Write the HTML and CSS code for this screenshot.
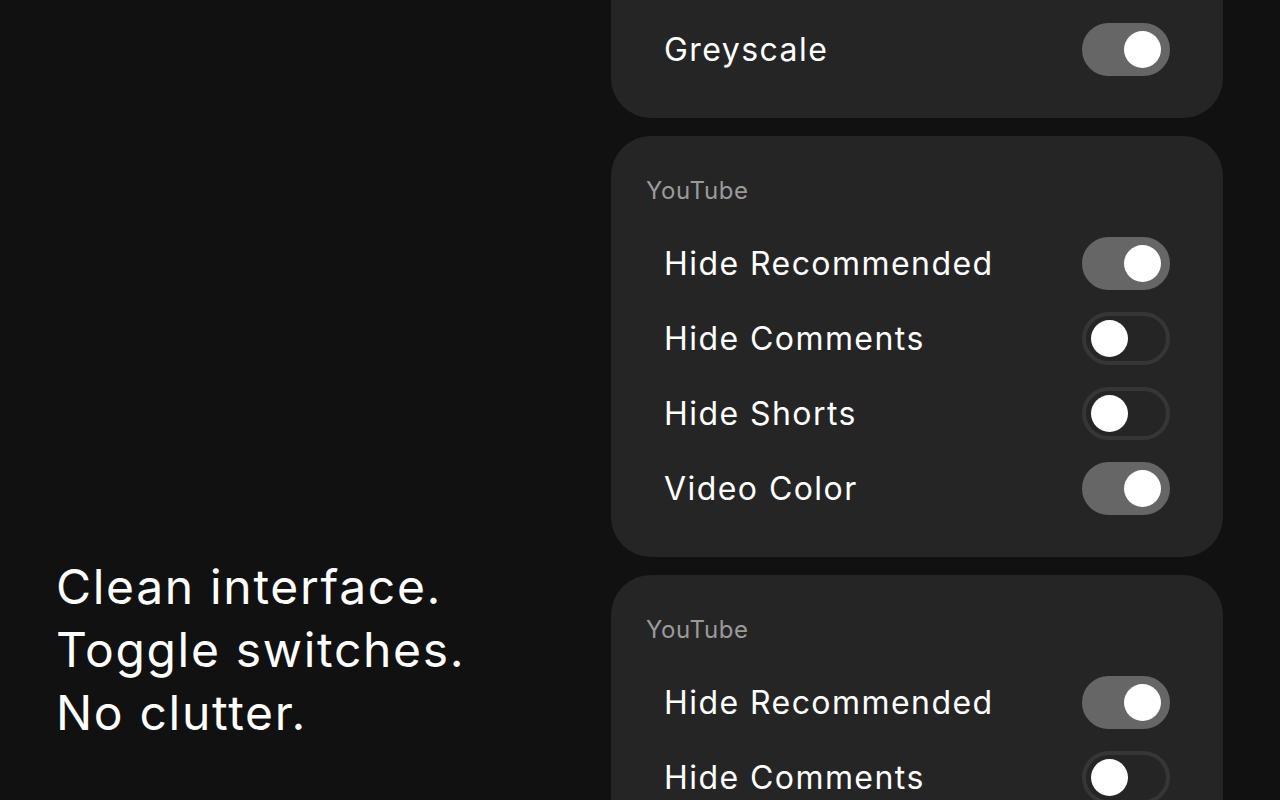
FILE: index.html
```html
<!DOCTYPE html>
<html lang="en">
<head>
<meta charset="utf-8">
<title>Settings</title>
<link rel="stylesheet" href="styles.css">
</head>
<body>
<main class="page">
  <section class="intro">
    <h1 class="headline">Clean interface.<br>Toggle switches.<br>No clutter.</h1>
  </section>
  <section class="panel">
    <div class="card">
      <div class="card-label">General</div>
      <div class="row"><span class="row-text">Greyscale</span><span class="toggle on"><span class="knob"></span></span></div>
    </div>
    <div class="card">
      <div class="card-label">YouTube</div>
      <div class="rows">
        <div class="row"><span class="row-text">Hide Recommended</span><span class="toggle on"><span class="knob"></span></span></div>
        <div class="row"><span class="row-text">Hide Comments</span><span class="toggle"><span class="knob"></span></span></div>
        <div class="row"><span class="row-text">Hide Shorts</span><span class="toggle"><span class="knob"></span></span></div>
        <div class="row"><span class="row-text">Video Color</span><span class="toggle on"><span class="knob"></span></span></div>
      </div>
    </div>
    <div class="card">
      <div class="card-label">YouTube</div>
      <div class="rows">
        <div class="row"><span class="row-text">Hide Recommended</span><span class="toggle on"><span class="knob"></span></span></div>
        <div class="row"><span class="row-text">Hide Comments</span><span class="toggle"><span class="knob"></span></span></div>
      </div>
    </div>
  </section>
</main>
</body>
</html>
```
FILE: styles.css
```css
html, body {
  margin: 0;
  padding: 0;
  background: #111111;
  height: 800px;
  overflow: hidden;
}
body {
  font-family: "Inter", "Liberation Sans", sans-serif;
  color: #ffffff;
}
.page {
  display: grid;
  grid-template-columns: 1fr 612px;
  grid-template-rows: 800px;
  padding: 0 57px;
  height: 800px;
  overflow: hidden;
}
.intro {
  display: flex;
  flex-direction: column;
  justify-content: flex-end;
  padding-bottom: 56px;
}
.headline {
  margin: 0;
  font-size: 48px;
  font-weight: 400;
  line-height: 63px;
  letter-spacing: 0.035em;
  margin-left: -1px;
}
.panel {
  display: flex;
  flex-direction: column;
  align-self: start;
  gap: 18px;
  margin-top: -78px;
}
.card {
  background: #252525;
  border-radius: 40px;
  padding: 40px 35px 42px;
  display: flex;
  flex-direction: column;
  flex-shrink: 0;
}
.card-label {
  font-size: 24px;
  line-height: 29px;
  color: #9a9a9a;
  letter-spacing: 0.025em;
  margin-bottom: 32px;
}
.rows {
  display: flex;
  flex-direction: column;
  gap: 22px;
}
.row {
  display: flex;
  align-items: center;
  justify-content: space-between;
  padding: 0 18px;
  height: 53px;
  flex-shrink: 0;
}
.row-text {
  font-size: 32px;
  line-height: 40px;
  letter-spacing: 0.045em;
}
.toggle {
  position: relative;
  box-sizing: border-box;
  width: 88px;
  height: 53px;
  border-radius: 27px;
  border: 4px solid #363636;
  background: #252525;
  flex-shrink: 0;
}
.toggle.on {
  background: #666666;
  border-color: #666666;
}
.knob {
  position: absolute;
  top: 4px;
  left: 5px;
  width: 37px;
  height: 37px;
  border-radius: 50%;
  background: #ffffff;
}
.toggle.on .knob {
  left: auto;
  right: 5px;
}
```
